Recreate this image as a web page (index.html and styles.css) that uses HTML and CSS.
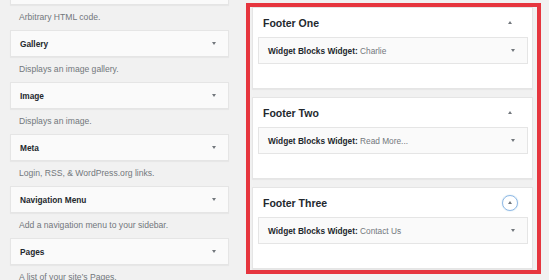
FILE: index.html
```html
<!DOCTYPE html>
<html>
<head>
<meta charset="utf-8">
<link rel="stylesheet" href="styles.css">
</head>
<body>
<div class="page">
  <div class="available">
    <div class="item first">
      <div class="wtop"><span class="wname"></span><span class="down"></span></div>
      <div class="desc">Arbitrary HTML code.</div>
    </div>
    <div class="item">
      <div class="wtop"><span class="wname">Gallery</span><span class="down"></span></div>
      <div class="desc">Displays an image gallery.</div>
    </div>
    <div class="item">
      <div class="wtop"><span class="wname">Image</span><span class="down"></span></div>
      <div class="desc">Displays an image.</div>
    </div>
    <div class="item">
      <div class="wtop"><span class="wname">Meta</span><span class="down"></span></div>
      <div class="desc">Login, RSS, &amp; WordPress.org links.</div>
    </div>
    <div class="item">
      <div class="wtop"><span class="wname">Navigation Menu</span><span class="down"></span></div>
      <div class="desc">Add a navigation menu to your sidebar.</div>
    </div>
    <div class="item">
      <div class="wtop"><span class="wname">Pages</span><span class="down"></span></div>
      <div class="desc">A list of your site’s Pages.</div>
    </div>
  </div>

  <div class="highlight">
    <div class="sidebar">
      <div class="shead"><h2>Footer One</h2><span class="toggle"><span class="up"></span></span></div>
      <div class="inner"><span class="iname"><b>Widget Blocks Widget:</b> <span class="ititle">Charlie</span></span><span class="down"></span></div>
    </div>
    <div class="sidebar">
      <div class="shead"><h2>Footer Two</h2><span class="toggle"><span class="up"></span></span></div>
      <div class="inner"><span class="iname"><b>Widget Blocks Widget:</b> <span class="ititle">Read More...</span></span><span class="down"></span></div>
    </div>
    <div class="sidebar">
      <div class="shead"><h2>Footer Three</h2><span class="toggle focus"><span class="up"></span></span></div>
      <div class="inner"><span class="iname"><b>Widget Blocks Widget:</b> <span class="ititle">Contact Us</span></span><span class="down"></span></div>
    </div>
  </div>
</div>
</body>
</html>
```

FILE: styles.css
```css
html, body {
  margin: 0;
  padding: 0;
  background: #f1f1f1;
  overflow: hidden;
}
body {
  font-family: "Liberation Sans", Arial, sans-serif;
  color: #23282d;
  width: 549px;
  height: 280px;
}
.page {
  display: flex;
  align-items: flex-start;
}
.available {
  width: 219px;
  margin-left: 10px;
  margin-top: -22px;
  display: flex;
  flex-direction: column;
}
.wtop {
  box-sizing: border-box;
  height: 27px;
  background: #fafafa;
  border: 1px solid #e5e5e5;
  box-shadow: 0 1px 1px rgba(0,0,0,0.04);
  display: flex;
  align-items: center;
  justify-content: space-between;
  padding: 0 12px 0 9px;
}
.wname {
  font-size: 8.3px;
  font-weight: bold;
  color: #23282d;
}
.desc {
  height: 25px;
  line-height: 25px;
  font-size: 8.6px;
  color: #72777c;
  padding-left: 9px;
}
.down {
  width: 0;
  height: 0;
  border-left: 2.5px solid transparent;
  border-right: 2.5px solid transparent;
  border-top: 3px solid #72777c;
}
.up {
  width: 0;
  height: 0;
  border-left: 2.5px solid transparent;
  border-right: 2.5px solid transparent;
  border-bottom: 3px solid #72777c;
}
.highlight {
  margin-left: 17px;
  margin-top: 3px;
  width: 295px;
  height: 271px;
  box-sizing: border-box;
  border: 4px solid #e6353e;
  padding: 0 4px 1px 2px;
  display: flex;
  flex-direction: column;
  gap: 8px;
}
.sidebar {
  box-sizing: border-box;
  height: 82px;
  background: #fff;
  border: 1px solid #e5e5e5;
  box-shadow: 0 1px 1px rgba(0,0,0,0.04);
  padding: 0 4px 0 5px;
}
.shead {
  height: 29px;
  display: flex;
  align-items: center;
  justify-content: space-between;
}
.shead h2 {
  margin: 0 0 0 5px;
  font-size: 10.5px;
  font-weight: bold;
  color: #23282d;
}
.toggle {
  width: 16px;
  height: 16px;
  box-sizing: border-box;
  border-radius: 50%;
  display: flex;
  align-items: center;
  justify-content: center;
  margin-right: 10px;
}
.toggle.focus {
  border: 1px solid #8fb8e6;
  box-shadow: 0 0 1px rgba(30,140,190,0.5);
}
.inner {
  box-sizing: border-box;
  height: 27px;
  background: #fafafa;
  border: 1px solid #e5e5e5;
  display: flex;
  align-items: center;
  justify-content: space-between;
  padding: 0 12px 0 9px;
}
.iname {
  font-size: 8.3px;
  color: #23282d;
}
.iname b {
  font-weight: bold;
}
.ititle {
  color: #72777c;
}
```
